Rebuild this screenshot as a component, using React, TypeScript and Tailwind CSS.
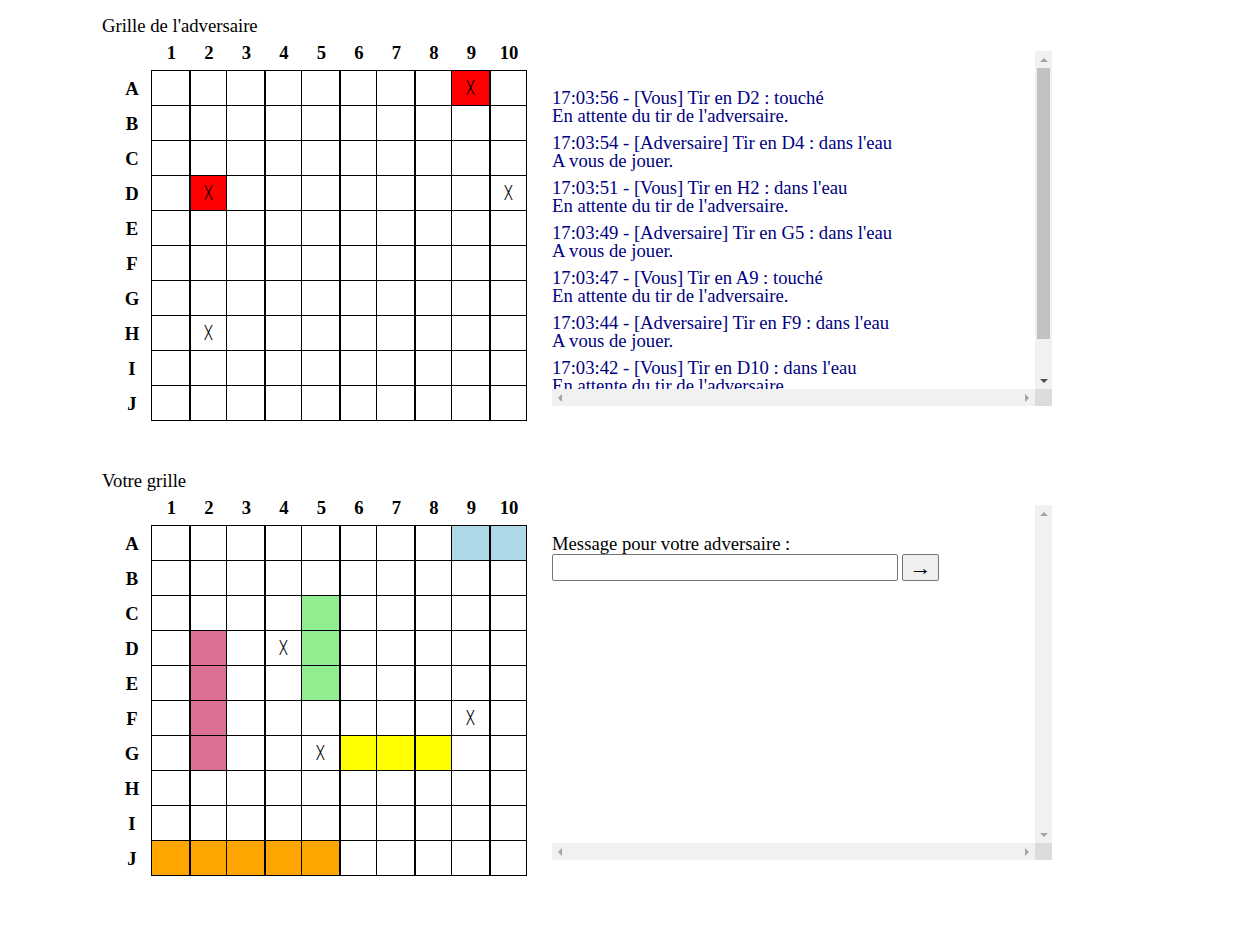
import React from "react";

const COLS = ["1", "2", "3", "4", "5", "6", "7", "8", "9", "10"];
const ROWS = ["A", "B", "C", "D", "E", "F", "G", "H", "I", "J"];
const WIDTHS = ["w-[39px]", "w-[36px]"];

type Cell = { bg?: string; x?: boolean };

const enemyGrid: Record<string, Cell> = {
  A9: { bg: "bg-[#ff0000]", x: true },
  D2: { bg: "bg-[#ff0000]", x: true },
  D10: { x: true },
  H2: { x: true },
};

const ownGrid: Record<string, Cell> = {
  A9: { bg: "bg-[#add8e6]" },
  A10: { bg: "bg-[#add8e6]" },
  C5: { bg: "bg-[#90ee90]" },
  D5: { bg: "bg-[#90ee90]" },
  E5: { bg: "bg-[#90ee90]" },
  D2: { bg: "bg-[#db7093]" },
  E2: { bg: "bg-[#db7093]" },
  F2: { bg: "bg-[#db7093]" },
  G2: { bg: "bg-[#db7093]" },
  G6: { bg: "bg-[#ffff00]" },
  G7: { bg: "bg-[#ffff00]" },
  G8: { bg: "bg-[#ffff00]" },
  J1: { bg: "bg-[#ffa500]" },
  J2: { bg: "bg-[#ffa500]" },
  J3: { bg: "bg-[#ffa500]" },
  J4: { bg: "bg-[#ffa500]" },
  J5: { bg: "bg-[#ffa500]" },
  D4: { x: true },
  F9: { x: true },
  G5: { x: true },
};

const log = [
  ["17:03:56 - [Vous] Tir en D2 : touché", "En attente du tir de l'adversaire."],
  ["17:03:54 - [Adversaire] Tir en D4 : dans l'eau", "A vous de jouer."],
  ["17:03:51 - [Vous] Tir en H2 : dans l'eau", "En attente du tir de l'adversaire."],
  ["17:03:49 - [Adversaire] Tir en G5 : dans l'eau", "A vous de jouer."],
  ["17:03:47 - [Vous] Tir en A9 : touché", "En attente du tir de l'adversaire."],
  ["17:03:44 - [Adversaire] Tir en F9 : dans l'eau", "A vous de jouer."],
  ["17:03:42 - [Vous] Tir en D10 : dans l'eau", "En attente du tir de l'adversaire."],
];

function Board({ cells }: { cells: Record<string, Cell> }) {
  return (
    <div className="ml-[11px]">
      <div className="flex pl-[39px] h-[18px] mb-[8px] leading-[18px] font-bold">
        {COLS.map((c, i) => (
          <div key={c} className={`${WIDTHS[i % 2]} text-center`}>
            {c}
          </div>
        ))}
      </div>
      <div className="flex">
        <div className="w-[38px] flex flex-col pt-[1px] font-bold">
          {ROWS.map((r) => (
            <div key={r} className="h-[35px] flex items-center justify-center">
              {r}
            </div>
          ))}
        </div>
        <div className="border-l border-t border-black">
          {ROWS.map((r) => (
            <div key={r} className="flex">
              {COLS.map((c, i) => {
                const cell = cells[r + c] || {};
                return (
                  <div
                    key={c}
                    className={`h-[35px] border-b border-black flex items-center justify-center ${
                      i % 2 === 0 ? "w-[39px] border-r-2" : "w-[36px] border-r"
                    } ${cell.bg || "bg-white"}`}
                  >
                    {cell.x && (
                      <span className="font-['Roboto',sans-serif] font-light text-[21px] leading-none text-black scale-x-[0.72] inline-block">
                        X
                      </span>
                    )}
                  </div>
                );
              })}
            </div>
          ))}
        </div>
      </div>
    </div>
  );
}

function Arrow({ dir, dark }: { dir: "up" | "down" | "left" | "right"; dark?: boolean }) {
  const pts = {
    up: "0,4 4,0 8,4",
    down: "0,0 8,0 4,4",
    left: "4,0 4,8 0,4",
    right: "0,0 0,8 4,4",
  }[dir];
  const vertical = dir === "up" || dir === "down";
  return (
    <svg width={vertical ? 8 : 4} height={vertical ? 4 : 8} viewBox={vertical ? "0 0 8 4" : "0 0 4 8"}>
      <polygon points={pts} fill={dark ? "#505050" : "#a3a3a3"} />
    </svg>
  );
}

function Panel({ children, thumb }: { children: React.ReactNode; thumb?: boolean }) {
  return (
    <div className="w-[500px] h-[355px] flex flex-col">
      <div className="flex flex-1 min-h-0">
        <div className="flex-1 overflow-hidden">{children}</div>
        <div className="w-[17px] bg-[#f1f1f1] flex flex-col">
          <div className="h-[17px] flex items-center justify-center">
            <Arrow dir="up" />
          </div>
          <div className="flex-1 px-[2px]">
            {thumb && <div className="h-[271px] bg-[#c1c1c1]" />}
          </div>
          <div className="h-[17px] flex items-center justify-center">
            <Arrow dir="down" dark={thumb} />
          </div>
        </div>
      </div>
      <div className="h-[17px] flex">
        <div className="flex-1 bg-[#f1f1f1] flex items-center justify-between px-[6px]">
          <Arrow dir="left" />
          <Arrow dir="right" />
        </div>
        <div className="w-[17px] bg-[#dcdcdc]" />
      </div>
    </div>
  );
}

export default function App() {
  return (
    <div className="min-h-[930px] bg-white text-black font-['Liberation_Serif',serif] text-[18.667px] pl-[102px] pt-[16px]">
      <div className="flex">
        <div>
          <div className="leading-[18px] mb-[9px] pt-[1px]">Grille de l'adversaire</div>
          <Board cells={enemyGrid} />
        </div>
        <div className="ml-[25px] mt-[35px]">
          <Panel thumb>
            <div className="pt-[38px] leading-[18px] text-[#000080]">
              {log.map(([a, b]) => (
                <div key={a} className="mb-[9px] whitespace-nowrap">
                  <div>{a}</div>
                  <div>{b}</div>
                </div>
              ))}
            </div>
          </Panel>
        </div>
      </div>

      <div className="flex mt-[50px]">
        <div>
          <div className="leading-[18px] mb-[9px] pt-[1px]">Votre grille</div>
          <Board cells={ownGrid} />
        </div>
        <div className="ml-[25px] mt-[34px]">
          <Panel>
            <div className="pt-[30px]">
              <div className="leading-[18px]">Message pour votre adversaire :</div>
              <div className="flex mt-[1px]">
                <input
                  type="text"
                  className="w-[346px] h-[27px] border border-[#767676] rounded-[2px] bg-white px-[2px] outline-none"
                />
                <button className="ml-[4px] w-[37px] h-[27px] border border-[#767676] rounded-[2px] bg-[#efefef] flex items-center justify-center leading-none text-[22px]">
                  →
                </button>
              </div>
            </div>
          </Panel>
        </div>
      </div>
    </div>
  );
}
